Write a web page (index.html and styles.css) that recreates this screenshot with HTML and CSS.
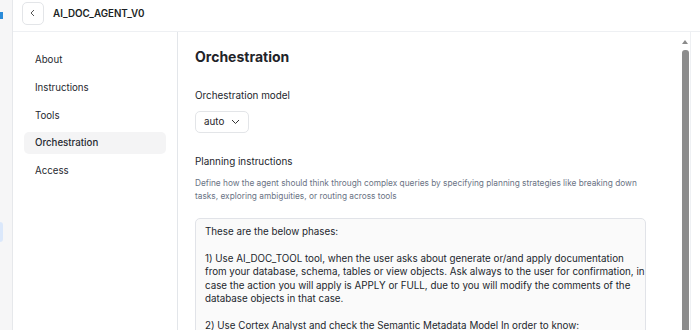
FILE: index.html
```html
<!DOCTYPE html>
<html lang="en">
<head>
    <meta charset="UTF-8">
    <meta name="viewport" content="width=device-width, initial-scale=1.0">
    <title>AI_DOC_AGENT_V0</title>
    <link rel="stylesheet" href="styles.css">
</head>
<body>
    <div class="rail">
        <div class="rail-icon"></div>
        <div class="rail-active"></div>
    </div>
    <div class="main">
        <div class="header">
            <button class="back-btn">
                <svg width="10" height="10" viewBox="0 0 10 10"><path d="M6 2 L3 5 L6 8" fill="none" stroke="#555" stroke-width="1"/></svg>
            </button>
            <div class="title">AI_DOC_AGENT_V0</div>
        </div>
        <div class="body">
            <div class="sidebar">
                <div class="nav-item">About</div>
                <div class="nav-item">Instructions</div>
                <div class="nav-item">Tools</div>
                <div class="nav-item active">Orchestration</div>
                <div class="nav-item">Access</div>
            </div>
            <div class="panel">
                <div class="content">
                    <h1>Orchestration</h1>
                    <div class="label">Orchestration model</div>
                    <div class="select">
                        auto
                        <svg width="9" height="6" viewBox="0 0 9 6"><path d="M1 1 L4.5 4.5 L8 1" fill="none" stroke="#333" stroke-width="1"/></svg>
                    </div>
                    <div class="label planning">Planning instructions</div>
                    <div class="hint">Define how the agent should think through complex queries by specifying planning strategies like breaking down tasks, exploring ambiguities, or routing across tools</div>
                    <div class="textarea">
                        <p>These are the below phases:</p>
                        <p>1) Use AI_DOC_TOOL tool, when the user asks about generate or/and apply documentation from your database, schema, tables or view objects. Ask always to the user for confirmation, in case the action you will apply is APPLY or FULL, due to you will modify the comments of the database objects in that case.</p>
                        <p>2) Use Cortex Analyst and check the Semantic Metadata Model In order to know:</p>
                    </div>
                </div>
                <div class="scrollbar">
                    <div class="arrow"></div>
                    <div class="thumb"></div>
                </div>
            </div>
        </div>
    </div>
</body>
</html>
```

FILE: styles.css
```css
body {
    margin: 0;
    height: 330px;
    overflow: hidden;
    display: flex;
    font-family: Inter, "Noto Sans", sans-serif;
    color: #1f2329;
    background-color: #fff;
}
.rail {
    width: 12px;
    flex-shrink: 0;
    background-color: #f6f6f7;
    border-right: 1px solid #e6e8eb;
    display: flex;
    flex-direction: column;
}
.rail-icon {
    width: 4px;
    height: 6px;
    margin-top: 12px;
    border-left: 3px dotted #2a8bd9;
}
.rail-active {
    width: 3px;
    height: 20px;
    margin-top: 204px;
    background-color: #dbe8fb;
    border-radius: 0 4px 4px 0;
}
.main {
    flex: 1;
    display: flex;
    flex-direction: column;
}
.header {
    height: 32px;
    flex-shrink: 0;
    box-sizing: border-box;
    border-bottom: 1px solid #eef0f3;
    display: flex;
    align-items: center;
    padding-left: 9px;
    padding-bottom: 5px;
    gap: 9px;
}
.back-btn {
    width: 22px;
    height: 23px;
    border: 1px solid #e3e5e8;
    border-radius: 5px;
    background: #fff;
    display: flex;
    align-items: center;
    justify-content: center;
    padding: 0;
}
.title {
    font-size: 9.8px;
    font-weight: 600;
    color: #1b1f24;
}
.body {
    flex: 1;
    display: flex;
    min-height: 0;
}
.sidebar {
    width: 165px;
    flex-shrink: 0;
    border-right: 1px solid #e3e6ea;
    padding: 17px 11px 0 11px;
    box-sizing: border-box;
}
.nav-item {
    height: 22px;
    line-height: 22px;
    padding-left: 11px;
    margin-bottom: 5.8px;
    font-size: 9.7px;
    color: #262a30;
    border-radius: 5px;
}
.nav-item.active {
    background-color: #f4f4f5;
    font-weight: 500;
}
.panel {
    flex: 1;
    display: flex;
    border-right: 1px solid #eef0f3;
    margin-right: 9px;
    min-height: 0;
}
.content {
    flex: 1;
    padding: 14px 34px 0 17px;
    overflow: hidden;
}
h1 {
    font-size: 14px;
    font-weight: 700;
    margin: 0 0 19px 0;
    line-height: 22px;
}
.label {
    font-size: 9.9px;
    color: #22262c;
    line-height: 16px;
    margin-bottom: 6px;
}
.select {
    display: inline-flex;
    align-items: center;
    gap: 7px;
    height: 22px;
    box-sizing: border-box;
    padding: 0 8px;
    border: 1px solid #e3e5e8;
    border-radius: 5px;
    font-size: 9.8px;
}
.label.planning {
    margin-top: 20px;
    margin-bottom: 8px;
}
.hint {
    font-size: 8.3px;
    line-height: 13px;
    color: #6a7384;
    margin-bottom: 15px;
}
.textarea {
    border: 1px solid #e1e3e8;
    border-radius: 5px;
    background-color: #fafafa;
    padding: 6px 0 6px 9px;
    font-size: 9.8px;
    line-height: 13.5px;
    color: #23272d;
}
.textarea p {
    margin: 0 0 13.5px 0;
}
.scrollbar {
    width: 10px;
    flex-shrink: 0;
    display: flex;
    flex-direction: column;
    align-items: center;
    padding-top: 8px;
}
.arrow {
    width: 0;
    height: 0;
    border-left: 3.5px solid transparent;
    border-right: 3.5px solid transparent;
    border-bottom: 4px solid #8a8a8a;
}
.thumb {
    flex: 1;
    width: 7px;
    margin-top: 6px;
    background-color: #8c8c8c;
    border-radius: 3px 3px 0 0;
}
```
